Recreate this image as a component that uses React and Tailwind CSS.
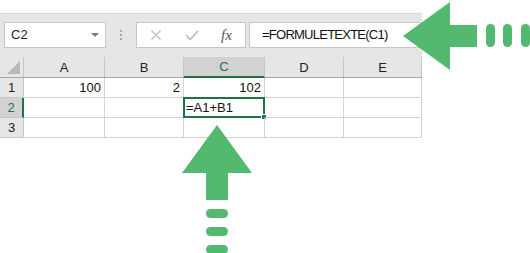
import React from "react";

const COLS = [
  { id: "A", w: "w-[81px]" },
  { id: "B", w: "w-[79px]" },
  { id: "C", w: "w-[81px]" },
  { id: "D", w: "w-[79px]" },
  { id: "E", w: "w-[78px]" },
];

const ROWS = [
  { n: 1, cells: { A: "100", B: "2", C: "102" } },
  { n: 2, cells: { C: "=A1+B1" } },
  { n: 3, cells: {} },
];

function NameBox() {
  return (
    <div className="flex h-[26px] w-[102px] items-center justify-between border border-[#c6c6c6] bg-white pl-[6px] pr-[6px] text-[13px] text-[#1f1f1f]">
      <span>C2</span>
      <span className="h-0 w-0 border-x-[4px] border-t-[4px] border-x-transparent border-t-[#7a7a7a]" />
    </div>
  );
}

function Grip() {
  return (
    <div className="flex h-[26px] w-[30px] flex-col items-center justify-center gap-[2px]">
      <span className="h-[2px] w-[2px] bg-[#a8a8a8]" />
      <span className="h-[2px] w-[2px] bg-[#a8a8a8]" />
      <span className="h-[2px] w-[2px] bg-[#a8a8a8]" />
    </div>
  );
}

function FormulaButtons() {
  return (
    <div className="flex h-[26px] w-[110px] items-center border border-[#c6c6c6] bg-white pl-[13px]">
      <svg width="12" height="12" viewBox="0 0 12 12" className="mr-[23px]">
        <path d="M1.5 1.5 L10.5 10.5 M10.5 1.5 L1.5 10.5" stroke="#bdbdbd" strokeWidth="1.3" fill="none" />
      </svg>
      <svg width="14" height="11" viewBox="0 0 14 11" className="mr-[22px]">
        <path d="M1 5 L5 9.5 L13 1" stroke="#bdbdbd" strokeWidth="1.8" fill="none" />
      </svg>
      <span className="font-['Liberation_Serif',serif] text-[15px] italic leading-none text-[#555]">fx</span>
    </div>
  );
}

function FormulaInput() {
  return (
    <div className="ml-[3px] flex h-[26px] w-[172px] items-center border border-[#c6c6c6] bg-white pl-[12px] text-[13px] tracking-[-0.75px] text-[#111]">
      =FORMULETEXTE(C1)
    </div>
  );
}

function HeaderRow() {
  return (
    <div className="flex h-[21px] border-b border-[#a6a6a6] text-[13px] text-[#222]">
      <div className="relative w-[24px] border-r border-[#c6c6c6]">
        <span className="absolute bottom-[3px] right-[3px] h-0 w-0 border-b-[13px] border-l-[13px] border-l-transparent border-b-[#b8b8b8]" />
      </div>
      {COLS.map((c) =>
        c.id === "C" ? (
          <div key={c.id} className={`${c.w} -mb-[1px] flex items-center justify-center border-r border-b-2 border-r-[#c6c6c6] border-b-[#217346] bg-[#d2d2d2] pt-[1px] text-[#217346]`}>
            {c.id}
          </div>
        ) : (
          <div key={c.id} className={`${c.w} flex items-center justify-center border-r border-[#c6c6c6] pt-[1px]`}>
            {c.id}
          </div>
        )
      )}
    </div>
  );
}

function Row({ row }) {
  const active = row.n === 2;
  return (
    <div className="flex h-[20px] text-[13px]">
      {active ? (
        <div className="flex w-[24px] items-center justify-center border-b border-r-2 border-b-[#c6c6c6] border-r-[#217346] bg-[#d2d2d2] text-[#217346]">
          {row.n}
        </div>
      ) : (
        <div className="flex w-[24px] items-center justify-center border-b border-r border-[#c6c6c6] bg-[#e6e6e6] text-[#222]">
          {row.n}
        </div>
      )}
      {COLS.map((c) => {
        const v = row.cells[c.id];
        const isSel = active && c.id === "C";
        const left = v && v.startsWith("=");
        return (
          <div
            key={c.id}
            className={`${c.w} relative flex items-center border-b border-r border-[#d4d4d4] text-[#111] ${left ? "justify-start pl-[2px]" : "justify-end pr-[3px]"}`}
          >
            {v}
            {isSel && (
              <>
                <span className="absolute -left-[1px] -top-[1px] h-[21px] w-[82px] border-2 border-[#217346]" />
                <span className="absolute -bottom-[3px] -right-[3px] h-[6px] w-[6px] border border-white bg-[#217346]" />
              </>
            )}
          </div>
        );
      })}
    </div>
  );
}

export default function App() {
  return (
    <div className="relative h-[253px] w-[530px] overflow-hidden bg-white font-['Liberation_Sans',Arial,sans-serif]">
      <div className="pt-[13px]">
        <div className="w-[422px] border-t border-[#d6d6d6] bg-[#e6e6e6]">
          <div className="flex h-[43px] items-start pl-[4px] pt-[8px]">
            <NameBox />
            <Grip />
            <FormulaButtons />
            <FormulaInput />
          </div>
          <HeaderRow />
        </div>
        <div className="w-[422px]">
          {ROWS.map((r) => (
            <Row key={r.n} row={r} />
          ))}
        </div>
      </div>

      {/* callout arrows */}
      <svg className="absolute left-0 top-0" width="530" height="253" viewBox="0 0 530 253">
        <g fill="#52b96f">
          <polygon points="403,36 450,2 450,25 477,25 477,47 450,47 450,70" />
          <rect x="486" y="24" width="9" height="23" rx="4.5" />
          <rect x="503" y="24" width="9" height="23" rx="4.5" />
          <rect x="521" y="24" width="9" height="23" rx="4.5" />
          <polygon points="217,125 252,173 228,173 228,200 206,200 206,173 182,173" />
          <rect x="206" y="209" width="22" height="9" rx="4.5" />
          <rect x="206" y="227" width="22" height="9" rx="4.5" />
          <rect x="206" y="245" width="22" height="9" rx="4.5" />
        </g>
      </svg>
    </div>
  );
}
